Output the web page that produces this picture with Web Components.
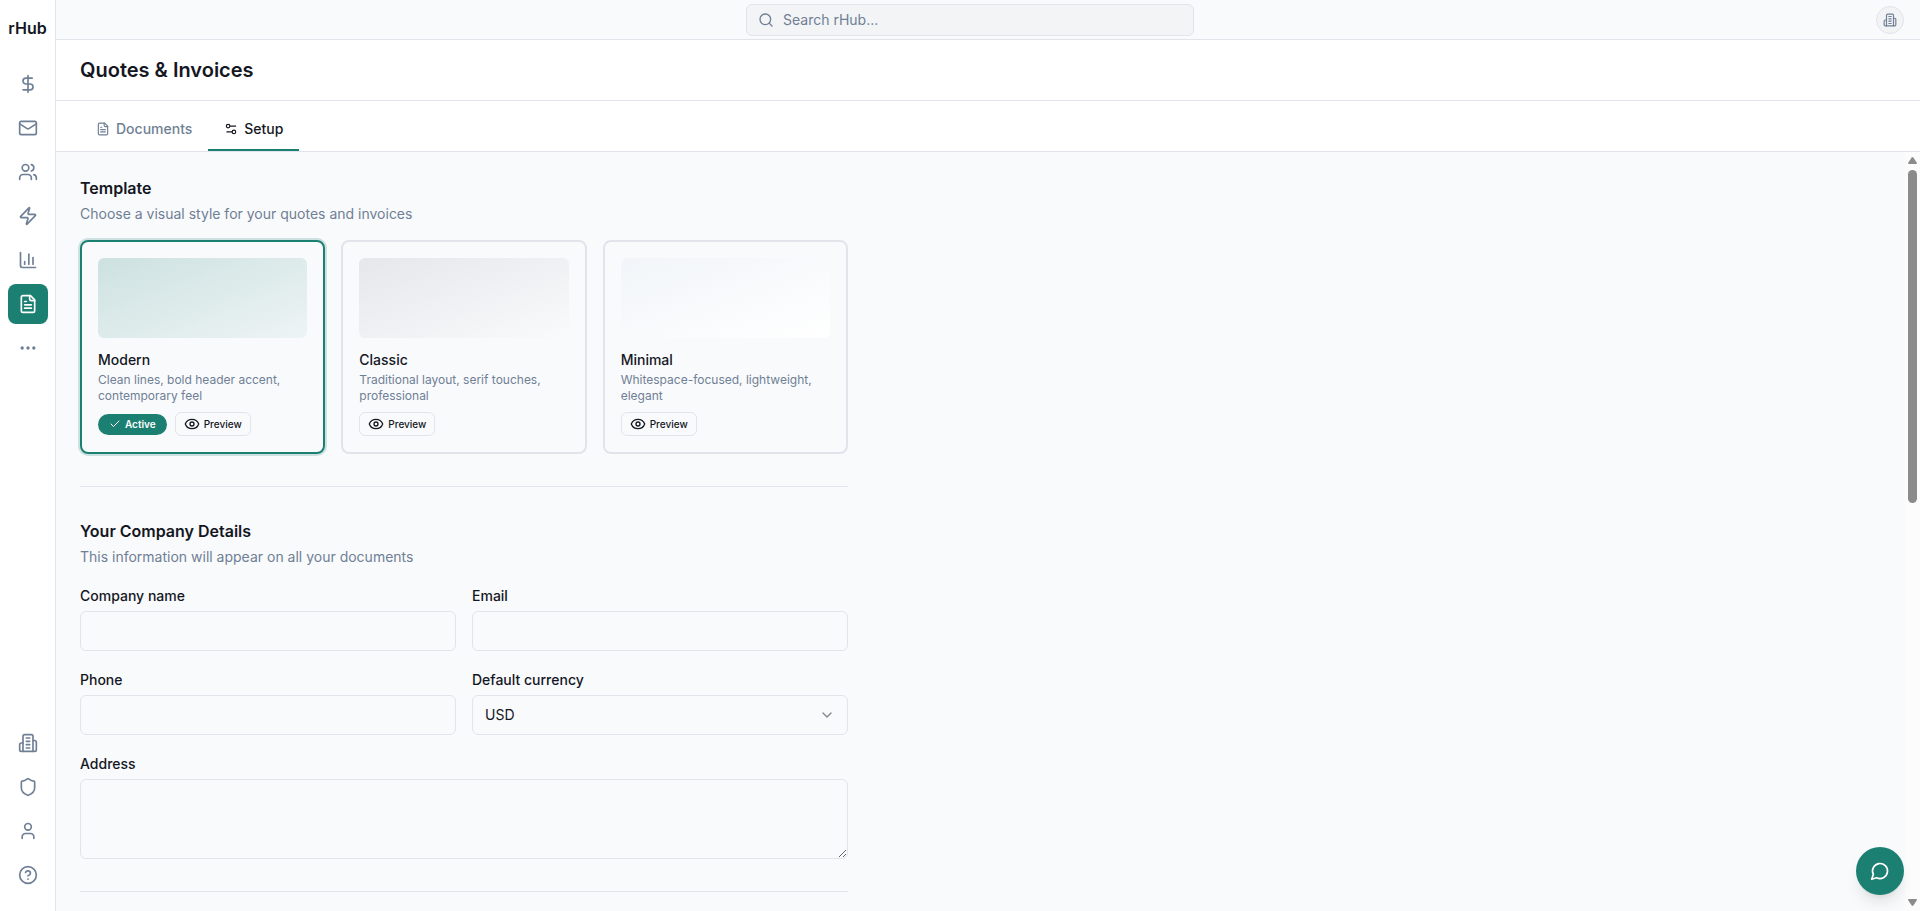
<!DOCTYPE html>
<html lang="en">
<head>
<meta charset="utf-8">
<meta name="viewport" content="width=device-width, initial-scale=1">
<title>Quotes &amp; Invoices - rHub</title>
<style>
    :root {
        --bg: #f9fafc;
        --surface: #ffffff;
        --border: #e2e4ec;
        --text: #14171f;
        --muted: #6f7f95;
        --primary: #1b7f72;
        --primary-ring: rgb(27 127 114 / 0.2);
    }
    body {
        margin: 0;
        font-family: Inter, system-ui, sans-serif;
        font-size: 14px;
        line-height: 20px;
        color: var(--text);
        background: var(--bg);
    }
</style>
</head>
<body>
<rh-app>
    <rh-sidebar slot="sidebar"></rh-sidebar>
    <rh-topbar slot="topbar"></rh-topbar>
    <rh-page-header slot="header">Quotes &amp; Invoices</rh-page-header>
    <rh-tabs slot="header">
        <rh-tab icon="file">Documents</rh-tab>
        <rh-tab icon="settings" active>Setup</rh-tab>
    </rh-tabs>

    <rh-section heading="Template" text="Choose a visual style for your quotes and invoices">
        <rh-template-grid>
            <rh-template-card name="Modern" active>Clean lines, bold header accent, contemporary feel</rh-template-card>
            <rh-template-card name="Classic">Traditional layout, serif touches, professional</rh-template-card>
            <rh-template-card name="Minimal">Whitespace-focused, lightweight, elegant</rh-template-card>
        </rh-template-grid>
    </rh-section>
    <rh-section heading="Your Company Details" text="This information will appear on all your documents">
        <rh-company-form></rh-company-form>
    </rh-section>

    <rh-chat-button slot="floating"></rh-chat-button>
</rh-app>

<script>
const icons = {
    dollar: '<path d="M12 2v20"/><path d="M17 5H9.5a3.5 3.5 0 0 0 0 7h5a3.5 3.5 0 0 1 0 7H6"/>',
    mail: '<rect width="20" height="16" x="2" y="4" rx="2"/><path d="m22 7-8.97 5.7a1.94 1.94 0 0 1-2.06 0L2 7"/>',
    users: '<path d="M16 21v-2a4 4 0 0 0-4-4H6a4 4 0 0 0-4 4v2"/><circle cx="9" cy="7" r="4"/><path d="M22 21v-2a4 4 0 0 0-3-3.87"/><path d="M16 3.13a4 4 0 0 1 0 7.75"/>',
    zap: '<path d="M4 14a1 1 0 0 1-.78-1.63l9.9-10.2a.5.5 0 0 1 .86.46l-1.92 6.02A1 1 0 0 0 13 10h7a1 1 0 0 1 .78 1.63l-9.9 10.2a.5.5 0 0 1-.86-.46l1.92-6.02A1 1 0 0 0 11 14z"/>',
    chart: '<path d="M3 3v16a2 2 0 0 0 2 2h16"/><path d="M18 17V9"/><path d="M13 17V5"/><path d="M8 17v-3"/>',
    file: '<path d="M15 2H6a2 2 0 0 0-2 2v16a2 2 0 0 0 2 2h12a2 2 0 0 0 2-2V7Z"/><path d="M14 2v4a2 2 0 0 0 2 2h4"/><path d="M10 9H8"/><path d="M16 13H8"/><path d="M16 17H8"/>',
    more: '<circle cx="12" cy="12" r="1"/><circle cx="19" cy="12" r="1"/><circle cx="5" cy="12" r="1"/>',
    building: '<path d="M6 22V4a2 2 0 0 1 2-2h8a2 2 0 0 1 2 2v18Z"/><path d="M6 12H4a2 2 0 0 0-2 2v6a2 2 0 0 0 2 2h2"/><path d="M18 9h2a2 2 0 0 1 2 2v9a2 2 0 0 1-2 2h-2"/><path d="M10 6h4"/><path d="M10 10h4"/><path d="M10 14h4"/><path d="M10 18h4"/>',
    shield: '<path d="M20 13c0 5-3.5 7.5-7.66 8.95a1 1 0 0 1-.67-.01C7.5 20.5 4 18 4 13V6a1 1 0 0 1 1-1c2 0 4.5-1.2 6.24-2.72a1.17 1.17 0 0 1 1.52 0C14.51 3.81 17 5 19 5a1 1 0 0 1 1 1z"/>',
    user: '<path d="M19 21v-2a4 4 0 0 0-4-4H9a4 4 0 0 0-4 4v2"/><circle cx="12" cy="7" r="4"/>',
    help: '<circle cx="12" cy="12" r="10"/><path d="M9.09 9a3 3 0 0 1 5.83 1c0 2-3 3-3 3"/><path d="M12 17h.01"/>',
    search: '<circle cx="11" cy="11" r="8"/><path d="m21 21-4.3-4.3"/>',
    settings: '<path d="M20 7h-9"/><path d="M14 17H5"/><circle cx="17" cy="17" r="3"/><circle cx="7" cy="7" r="3"/>',
    check: '<path d="M20 6 9 17l-5-5"/>',
    eye: '<path d="M2.06 12.35a1 1 0 0 1 0-.7 10.75 10.75 0 0 1 19.88 0 1 1 0 0 1 0 .7 10.75 10.75 0 0 1-19.88 0"/><circle cx="12" cy="12" r="3"/>',
    chevron: '<path d="m6 9 6 6 6-6"/>',
    message: '<path d="M7.9 20A9 9 0 1 0 4 16.1L2 22Z"/>'
}

const reset = /*css*/ `
    :host, * {
        box-sizing: border-box;
    }
    * {
        margin: 0;
        padding: 0;
    }
    button, input, select, textarea {
        font: inherit;
        color: inherit;
    }
`

class Icon extends HTMLElement {
    constructor() {
        super()
        this.shadow = this.attachShadow({ mode: 'open' })
        this.render()
    }

    render() {
        this.shadow.innerHTML = /*html*/ `
            <style>
                :host {
                    display: block;
                    flex: none;
                    width: var(--icon-size, 20px);
                    height: var(--icon-size, 20px);
                }
                svg {
                    display: block;
                    width: 100%;
                    height: 100%;
                    fill: none;
                    stroke: currentColor;
                    stroke-width: 2;
                    stroke-linecap: round;
                    stroke-linejoin: round;
                }
            </style>
            <svg viewBox="0 0 24 24" aria-hidden="true">${icons[this.getAttribute('name')]}</svg>
        `
    }
}

class App extends HTMLElement {
    constructor() {
        super()
        this.shadow = this.attachShadow({ mode: 'open' })
        this.render()
        this.setupEvents()
    }

    render() {
        this.shadow.innerHTML = /*html*/ `
            <style>
                ${reset}
                :host {
                    display: flex;
                    height: 100vh;
                }
                .main {
                    flex: 1;
                    min-width: 0;
                    display: flex;
                    flex-direction: column;
                }
                .body {
                    flex: 1;
                    min-height: 0;
                    display: flex;
                }
                main {
                    flex: 1;
                    min-width: 0;
                    overflow-y: auto;
                    scrollbar-width: none;
                    padding: 24px;
                }
                .column {
                    display: flex;
                    flex-direction: column;
                    gap: 32px;
                    max-width: 768px;
                }
            </style>
            <slot name="sidebar"></slot>
            <div class="main">
                <slot name="topbar"></slot>
                <slot name="header"></slot>
                <div class="body">
                    <main>
                        <div class="column"><slot></slot></div>
                    </main>
                    <rh-scrollbar></rh-scrollbar>
                </div>
            </div>
            <slot name="floating"></slot>
        `
    }

    setupEvents() {
        const bar = this.shadow.querySelector('rh-scrollbar')
        const main = this.shadow.querySelector('main')
        bar.addEventListener('scroll-step', (e) => {
            main.scrollBy({ top: e.detail, behavior: 'smooth' })
        })
    }
}

class Sidebar extends HTMLElement {
    constructor() {
        super()
        this.shadow = this.attachShadow({ mode: 'open' })
        this.render()
    }

    link(icon, label, active) {
        return `<a href="#" aria-label="${label}" ${active ? 'class="active" aria-current="page"' : ''}><rh-icon name="${icon}"></rh-icon></a>`
    }

    render() {
        this.shadow.innerHTML = /*html*/ `
            <style>
                ${reset}
                :host {
                    flex: none;
                    display: flex;
                    flex-direction: column;
                    width: 56px;
                    padding-bottom: 16px;
                    background: var(--surface);
                    border-right: 1px solid var(--border);
                }
                .logo {
                    line-height: 56px;
                    margin-bottom: 8px;
                    text-align: center;
                    font-size: 16px;
                    font-weight: 600;
                    color: var(--text);
                    text-decoration: none;
                }
                nav {
                    display: flex;
                    flex-direction: column;
                    gap: 4px;
                    padding-left: 8px;
                }
                nav:last-child {
                    margin-top: auto;
                }
                nav a {
                    display: flex;
                    align-items: center;
                    justify-content: center;
                    width: 40px;
                    height: 40px;
                    border-radius: 8px;
                    color: var(--muted);
                }
                nav a:hover {
                    background: #f3f4f6;
                }
                nav a.active {
                    background: var(--primary);
                    color: white;
                }
            </style>
            <a class="logo" href="#">rHub</a>
            <nav aria-label="Main">
                ${this.link('dollar', 'Sales')}
                ${this.link('mail', 'Mail')}
                ${this.link('users', 'Contacts')}
                ${this.link('zap', 'Automations')}
                ${this.link('chart', 'Reports')}
                ${this.link('file', 'Quotes and invoices', true)}
                ${this.link('more', 'More')}
            </nav>
            <nav aria-label="Account">
                ${this.link('building', 'Organization')}
                ${this.link('shield', 'Security')}
                ${this.link('user', 'Profile')}
                ${this.link('help', 'Help')}
            </nav>
        `
    }
}

class Topbar extends HTMLElement {
    constructor() {
        super()
        this.shadow = this.attachShadow({ mode: 'open' })
        this.render()
    }

    render() {
        this.shadow.innerHTML = /*html*/ `
            <style>
                ${reset}
                :host {
                    flex: none;
                    display: flex;
                    align-items: center;
                    gap: 8px;
                    height: 40px;
                    padding: 0 16px;
                    border-bottom: 1px solid var(--border);
                }
                .center {
                    flex: 1;
                    display: flex;
                    justify-content: center;
                }
                .search {
                    --icon-size: 16px;
                    position: relative;
                    width: 100%;
                    max-width: 448px;
                    color: var(--muted);
                }
                .search rh-icon {
                    position: absolute;
                    left: 12px;
                    top: 8px;
                }
                input {
                    display: block;
                    width: 100%;
                    height: 32px;
                    padding: 0 12px 0 36px;
                    border: 1px solid var(--border);
                    border-radius: 6px;
                    background: #f3f4f6;
                    color: var(--text);
                }
                input::placeholder {
                    color: var(--muted);
                    opacity: 1;
                }
                button {
                    --icon-size: 14px;
                    display: flex;
                    align-items: center;
                    justify-content: center;
                    width: 28px;
                    height: 28px;
                    border: 1px solid var(--border);
                    border-radius: 50%;
                    background: #f1f3f5;
                    color: var(--muted);
                    cursor: pointer;
                }
            </style>
            <div class="center">
                <label class="search">
                    <rh-icon name="search"></rh-icon>
                    <input type="search" placeholder="Search rHub..." aria-label="Search rHub">
                </label>
            </div>
            <button type="button" aria-label="Switch organization"><rh-icon name="building"></rh-icon></button>
        `
    }
}

class PageHeader extends HTMLElement {
    constructor() {
        super()
        this.shadow = this.attachShadow({ mode: 'open' })
        this.render()
    }

    render() {
        this.shadow.innerHTML = /*html*/ `
            <style>
                ${reset}
                :host {
                    flex: none;
                    display: block;
                    padding: 16px 24px;
                    background: var(--surface);
                    border-bottom: 1px solid var(--border);
                }
                h1 {
                    font-size: 20px;
                    line-height: 28px;
                    font-weight: 600;
                }
            </style>
            <h1><slot></slot></h1>
        `
    }
}

class Tabs extends HTMLElement {
    constructor() {
        super()
        this.shadow = this.attachShadow({ mode: 'open' })
        this.render()
    }

    render() {
        this.shadow.innerHTML = /*html*/ `
            <style>
                :host {
                    flex: none;
                    display: flex;
                    padding: 8px 24px 0;
                    background: var(--surface);
                    border-bottom: 1px solid var(--border);
                }
            </style>
            <slot></slot>
        `
    }
}

class Tab extends HTMLElement {
    constructor() {
        super()
        this.shadow = this.attachShadow({ mode: 'open' })
        this.render()
    }

    render() {
        this.shadow.innerHTML = /*html*/ `
            <style>
                ${reset}
                :host {
                    --icon-size: 14px;
                    display: block;
                }
                button {
                    display: flex;
                    align-items: center;
                    gap: 6px;
                    padding: 10px 16px;
                    border: none;
                    border-bottom: 2px solid transparent;
                    background: none;
                    font-weight: 500;
                    color: var(--muted);
                    cursor: pointer;
                }
                :host([active]) button {
                    border-color: var(--primary);
                    color: var(--text);
                }
            </style>
            <button type="button">
                <rh-icon name="${this.getAttribute('icon')}"></rh-icon>
                <slot></slot>
            </button>
        `
    }
}

class Section extends HTMLElement {
    constructor() {
        super()
        this.shadow = this.attachShadow({ mode: 'open' })
        this.render()
    }

    render() {
        this.shadow.innerHTML = /*html*/ `
            <style>
                ${reset}
                :host {
                    display: block;
                    padding-bottom: 32px;
                    border-bottom: 1px solid var(--border);
                }
                h2 {
                    font-size: 16px;
                    line-height: 24px;
                    font-weight: 600;
                }
                p {
                    margin: 4px 0 16px;
                    color: var(--muted);
                }
            </style>
            <h2>${this.getAttribute('heading')}</h2>
            <p>${this.getAttribute('text')}</p>
            <slot></slot>
        `
    }
}

class TemplateGrid extends HTMLElement {
    constructor() {
        super()
        this.shadow = this.attachShadow({ mode: 'open' })
        this.render()
        this.setupEvents()
    }

    render() {
        this.shadow.innerHTML = /*html*/ `
            <style>
                :host {
                    display: grid;
                    grid-template-columns: repeat(3, 1fr);
                    gap: 16px;
                }
            </style>
            <slot></slot>
        `
    }

    setupEvents() {
        this.addEventListener('template-selected', (e) => {
            this.querySelectorAll('rh-template-card').forEach((card) => {
                card.toggleAttribute('active', card === e.target)
            })
        })
    }
}

class TemplateCard extends HTMLElement {
    constructor() {
        super()
        this.name = this.getAttribute('name')
        this.shadow = this.attachShadow({ mode: 'open' })
        this.render()
        this.setupEvents()
    }

    render() {
        this.shadow.innerHTML = /*html*/ `
            <style>
                ${reset}
                :host {
                    display: block;
                    padding: 16px;
                    border: 2px solid var(--border);
                    border-radius: 8px;
                    cursor: pointer;
                }
                :host([active]) {
                    border-color: var(--primary);
                    box-shadow: 0 0 0 2px var(--primary-ring);
                }
                .swatch {
                    height: 80px;
                    margin-bottom: 12px;
                    border-radius: 6px;
                }
                .modern {
                    background: linear-gradient(to bottom right, rgb(27 127 114 / 0.2), rgb(27 127 114 / 0.05));
                }
                .classic {
                    background: linear-gradient(to bottom right, #e5e7eb, #f9fafb);
                }
                .minimal {
                    background: linear-gradient(to bottom right, #f1f5f9, #ffffff);
                }
                h3 {
                    font-size: 14px;
                    line-height: 20px;
                    font-weight: 500;
                }
                p {
                    margin: 2px 0 8px;
                    font-size: 12px;
                    line-height: 16px;
                    color: var(--muted);
                }
                .actions {
                    display: flex;
                    align-items: center;
                    gap: 8px;
                    font-size: 10px;
                    line-height: 15px;
                }
                .badge {
                    --icon-size: 12px;
                    display: none;
                    align-items: center;
                    gap: 4px;
                    padding: 3px 11px;
                    border-radius: 12px;
                    background: var(--primary);
                    color: white;
                    font-weight: 600;
                }
                :host([active]) .badge {
                    display: flex;
                }
                button {
                    --icon-size: 16px;
                    display: flex;
                    align-items: center;
                    gap: 4px;
                    height: 24px;
                    padding: 0 8px;
                    border: 1px solid var(--border);
                    border-radius: 6px;
                    background: var(--bg);
                    font-weight: 500;
                    cursor: pointer;
                }
            </style>
            <div class="swatch ${this.name.toLowerCase()}"></div>
            <h3>${this.name}</h3>
            <p><slot></slot></p>
            <div class="actions">
                <span class="badge"><rh-icon name="check"></rh-icon>Active</span>
                <button type="button"><rh-icon name="eye"></rh-icon>Preview</button>
            </div>
        `
    }

    setupEvents() {
        this.shadow.querySelector('button').addEventListener('click', (e) => {
            e.stopPropagation()
        })
        this.addEventListener('click', () => {
            this.dispatchEvent(new CustomEvent('template-selected', {
                bubbles: true,
                composed: true
            }))
        })
    }
}

class CompanyForm extends HTMLElement {
    constructor() {
        super()
        this.shadow = this.attachShadow({ mode: 'open' })
        this.render()
    }

    render() {
        this.shadow.innerHTML = /*html*/ `
            <style>
                ${reset}
                :host {
                    display: block;
                }
                form {
                    display: grid;
                    grid-template-columns: 1fr 1fr;
                    gap: 16px;
                }
                .wide {
                    grid-column: 1 / -1;
                }
                label {
                    display: block;
                    margin-bottom: 2px;
                    line-height: 26px;
                    font-weight: 500;
                }
                input, select, textarea {
                    display: block;
                    width: 100%;
                    height: 40px;
                    padding: 8px 12px;
                    border: 1px solid var(--border);
                    border-radius: 6px;
                    background: var(--bg);
                }
                textarea {
                    height: 80px;
                    resize: vertical;
                }
                select {
                    appearance: none;
                }
                .select {
                    --icon-size: 16px;
                    position: relative;
                }
                .select rh-icon {
                    position: absolute;
                    right: 13px;
                    top: 12px;
                    opacity: 0.5;
                    pointer-events: none;
                }
            </style>
            <form>
                <div>
                    <label for="name">Company name</label>
                    <input id="name" type="text">
                </div>
                <div>
                    <label for="email">Email</label>
                    <input id="email" type="email">
                </div>
                <div>
                    <label for="phone">Phone</label>
                    <input id="phone" type="tel">
                </div>
                <div>
                    <label for="currency">Default currency</label>
                    <div class="select">
                        <select id="currency">
                            <option>USD</option>
                        </select>
                        <rh-icon name="chevron"></rh-icon>
                    </div>
                </div>
                <div class="wide">
                    <label for="address">Address</label>
                    <textarea id="address"></textarea>
                </div>
            </form>
        `
    }
}

class Scrollbar extends HTMLElement {
    constructor() {
        super()
        this.shadow = this.attachShadow({ mode: 'open' })
        this.render()
        this.setupEvents()
    }

    render() {
        this.shadow.innerHTML = /*html*/ `
            <style>
                ${reset}
                :host {
                    flex: none;
                    display: flex;
                    flex-direction: column;
                    width: 15px;
                    background: #fcfcfc;
                }
                button {
                    display: flex;
                    justify-content: center;
                    align-items: center;
                    height: 17px;
                    border: none;
                    background: none;
                }
                svg {
                    width: 9px;
                    height: 7px;
                    fill: #8b8b8b;
                }
                .track {
                    flex: 1;
                    padding: 1px 3px;
                }
                .thumb {
                    height: 46%;
                    border-radius: 5px;
                    background: #8b8b8b;
                }
            </style>
            <button type="button" tabindex="-1" aria-label="Scroll up">
                <svg viewBox="0 0 9 7"><path d="M3.7.5Q4.5-.4 5.3.5L9 6Q9 7 8 7H1Q0 7 0 6Z"/></svg>
            </button>
            <div class="track"><div class="thumb"></div></div>
            <button type="button" tabindex="-1" aria-label="Scroll down">
                <svg viewBox="0 0 9 7"><path d="M3.7 6.5Q4.5 7.4 5.3 6.5L9 1Q9 0 8 0H1Q0 0 0 1Z"/></svg>
            </button>
        `
    }

    setupEvents() {
        this.shadow.querySelectorAll('button').forEach((button, i) => {
            button.addEventListener('click', () => {
                this.dispatchEvent(new CustomEvent('scroll-step', { detail: i ? 40 : -40 }))
            })
        })
    }
}

class ChatButton extends HTMLElement {
    constructor() {
        super()
        this.shadow = this.attachShadow({ mode: 'open' })
        this.render()
    }

    render() {
        this.shadow.innerHTML = /*html*/ `
            <style>
                ${reset}
                :host {
                    position: fixed;
                    right: 16px;
                    bottom: 16px;
                }
                button {
                    display: flex;
                    align-items: center;
                    justify-content: center;
                    width: 48px;
                    height: 48px;
                    border: none;
                    border-radius: 50%;
                    background: var(--primary);
                    color: white;
                    box-shadow: 0 10px 15px -3px rgb(0 0 0 / 0.1), 0 4px 6px -4px rgb(0 0 0 / 0.1);
                    cursor: pointer;
                }
            </style>
            <button type="button" aria-label="Open chat"><rh-icon name="message"></rh-icon></button>
        `
    }
}

customElements.define('rh-icon', Icon)
customElements.define('rh-scrollbar', Scrollbar)
customElements.define('rh-sidebar', Sidebar)
customElements.define('rh-topbar', Topbar)
customElements.define('rh-page-header', PageHeader)
customElements.define('rh-tab', Tab)
customElements.define('rh-tabs', Tabs)
customElements.define('rh-template-card', TemplateCard)
customElements.define('rh-template-grid', TemplateGrid)
customElements.define('rh-company-form', CompanyForm)
customElements.define('rh-section', Section)
customElements.define('rh-chat-button', ChatButton)
customElements.define('rh-app', App)
</script>
</body>
</html>
